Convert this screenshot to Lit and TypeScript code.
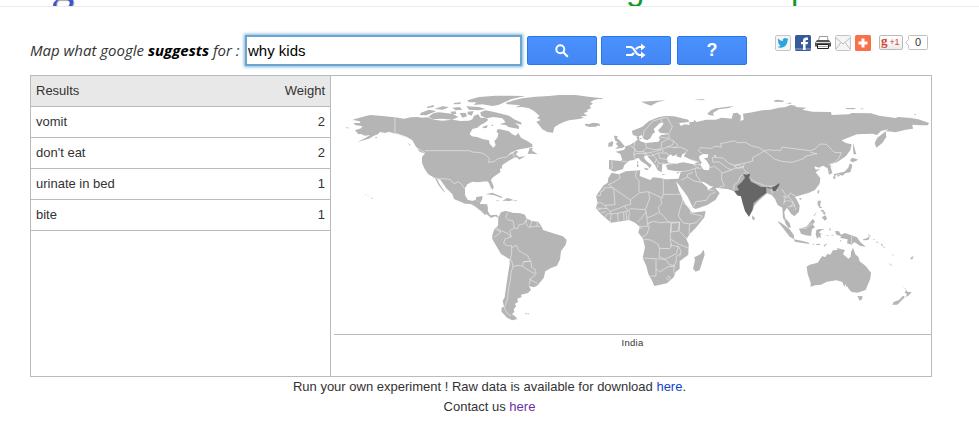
import { LitElement, html, css, svg } from "lit";
import { customElement, property } from "lit/decorators.js";

// Each region is drawn on a grid three times finer than the page, from its own origin.
interface Region { x: number; y: number; land: string; borders: string; focus?: string; water?: string; }

const regions: Region[] = [
  {
    x: 340, y: 85,
    land: `M45 103 62 98 80 93 95 90 130 93 168 97 195 101 215 97 235 96 250 98 265 97 285 104 310 107 340 104 365 108 390 107 400 103 405 92 418 88 424 98 440 98 448 104 440 112 425 120 415 128 400 132 392 147 398 154 415 156 430 162 450 166 452 176 463 188 470 180 466 168 475 158 478 146 472 138 478 132 490 134 510 139 520 148 530 152 538 144 546 158 565 168 580 178 580 186 560 190 535 194 515 203 508 211 522 204 530 197 538 200 530 208 540 216 560 214 540 224 536 218 528 217 508 228 490 240 488 252 483 250 484 262 460 278 456 286 464 304 462 314 456 309 450 294 444 289 430 290 415 292 400 290 385 298 378 310 378 330 386 344 400 348 410 345 412 336 430 333 430 342 422 356 442 360 446 366 446 385 438 390 425 377 410 365 395 357 378 356 345 342 340 328 322 310 304 284 294 282 302 298 320 324 312 317 299 301 288 280 268 268 257 252 249 234 249 216 258 205 240 195 230 184 220 166 205 157 188 150 170 146 148 140 140 144 122 141 118 147 105 152 90 161 55 171 78 160 94 150 78 152 66 147 58 148 48 136 66 130 70 124 48 120 44 114 64 114 62 109 42 105Z
    M385 46 420 36 470 32 560 33 518 42 500 50 478 60 460 63 430 58 404 60 412 52 390 52Z M343 54 366 52 364 57 346 58Z M262 66 285 60 284 66 266 69Z M286 72 310 64 330 66 312 74Z M340 68 362 66 370 74 350 76Z M246 83 270 74 292 78 262 91 242 90Z M268 95 284 84 300 82 340 86 358 96 340 104 310 101 282 103Z M334 80 350 79 352 86 340 88Z M362 85 380 83 384 94 370 98Z M382 64 420 66 440 72 420 76 390 74Z M386 80 404 78 398 92 386 88Z M424 82 440 76 462 80 478 84 510 92 528 104 546 112 548 119 528 114 540 124 540 132 520 128 508 126 500 120 482 118 500 112 490 100 462 96 444 100 426 92Z M430 126 446 120 444 128 434 130Z M456 122 462 118 462 123Z
    M20 127 34 129 22 130Z M106 158 116 155 112 160Z M207 173 214 180 212 182Z M236 193 256 201 258 205 243 201Z M95 337 101 340 99 343Z M86 331 90 334 86 334Z M78 328 82 330 78 330Z
    M440 328 460 323 490 336 488 339 464 330Z M497 343 507 339 522 344 512 348 497 347Z M472 345 482 347 474 348Z M528 346 536 347 529 349Z M566 207 572 190 582 188 578 196 596 208 580 206Z M485 382 500 378 520 383 552 387 552 390 484 390Z`,
    borders: `M168 97V146L178 146 186 152 205 157M258 197H392L400 201 425 203 438 208 446 215 452 222 448 232 468 229 474 222 490 218 505 216 512 207 522 204 526 218M287 279 300 281 322 282 334 284 345 296 358 290 368 298 378 312M400 358 410 348 420 350M414 366 426 362 442 361M428 378 446 375M236 190 258 203`,
  },
  {
    x: 480, y: 85,
    land: `M85 52 105 46 130 40 170 35 210 33 240 30 290 30 328 35 370 40 345 45 334 51 342 56 332 62 336 70 322 76 328 79 314 85 325 92 305 94 315 98 300 102 270 106 256 110 240 118 226 127 222 143 205 141 190 133 180 120 172 110 185 105 174 98 182 93 165 78 150 70 130 66 108 67 125 61 80 57Z M318 116 330 117 342 113 358 115 363 120 350 125 332 126 319 122Z M475 227 478 232 476 236 474 233Z M474 237 479 239 478 246 474 246Z`,
    borders: ``,
  },
  {
    x: 600, y: 85,
    land: `M30 225 65 228 70 224 64 207 50 200 76 194 80 184 92 180 106 172 116 164 112 156 120 153 122 168 140 174 178 170 184 162 178 158 186 150 206 148 214 146 184 144 177 136 190 122 194 114 184 113 164 132 168 142 160 148 154 160 145 166 134 162 128 150 118 155 102 150 98 138 130 125 150 108 180 96 200 93 225 94 268 104 270 111 240 114 246 123 256 118 272 120 270 112 284 110 286 104 292 111 322 104 350 104 368 98 398 101 402 85 415 83 426 92 424 108 434 104 432 86 460 82 490 76 515 74 540 68 560 66 574 60 590 62 590 66 622 68 610 74 640 80 696 81 698 90 750 88 758 84 816 85 840 92 890 99 898 96 935 99 958 103 990 114 986 121 964 121 940 119 942 131 920 134 890 142 860 138 862 156 850 174 832 188 827 174 835 158 868 133 846 138 834 150 820 146 774 148 728 166 740 174 758 178 754 196 740 214 714 232 694 238 696 250 700 264 690 269 686 250 672 242 660 248 646 244 650 254 664 252 650 262 664 280 662 296 648 315 630 323 600 332 588 336 594 345 602 362 600 380 586 394 576 386 564 368 556 380 558 398 572 415 576 428 566 424 552 400 550 368 536 360 528 342 518 330 504 325 476 350 466 362 462 374 450 395 440 380 432 352 426 334 415 332 404 318 385 312 360 310 334 303 315 291 306 290 324 306 328 315 344 304 362 324 350 344 325 360 290 372 282 368 265 334 234 292 240 278 246 258 228 258 206 254 201 242 212 234 190 238 188 262 176 256 168 240 148 217 144 211 134 216 142 228 158 240 152 250 144 240 126 228 118 218 104 225 90 227 76 240 72 252 45 260 30 252Z
    M45 152 56 153 54 160 62 166 74 180 78 184 70 189 48 191 58 184 50 176 56 172 48 166Z M28 175 40 168 43 174 40 184 28 186Z M122 158 128 160 126 164Z M126 50 160 48 200 46 175 52 156 62 140 56Z M325 86 336 76 350 70 404 63 390 69 360 73 342 84 345 92 330 90Z M285 43 320 43 310 46Z M524 47 534 44 555 47 552 51 526 50Z M560 54 578 53 575 57Z M740 69 772 69 764 73 742 72Z M784 70 796 72 786 73Z M944 88 952 88 950 91Z M0 39 12 40 8 43 0 42Z M0 115 3 122 0 124Z M136 248 150 251 144 256 136 252Z M188 267 200 268 192 270Z M233 262 243 259 236 266Z
    M763 174 766 186 768 194 772 208 764 208 762 192Z M754 224 760 218 778 224 762 232 754 228Z M756 236 760 242 754 262 740 264 730 272 718 268 706 273 704 268 722 263 736 260 748 248 752 236Z M704 273 711 275 707 283 702 279Z M714 270 724 269 718 276Z M656 318 662 314 659 326 655 324Z M600 340 608 339 604 346Z`,
    water: `M206 230 204 218 214 208 222 214 234 208 232 214 246 218 250 208 262 202 254 214 276 224 296 232 284 238 252 232 232 236 212 235Z M300 214 312 207 328 208 326 218 314 220 322 226 332 242 330 256 314 254 304 240 308 232 302 224Z M344 212 350 210 350 216Z`,
    borders: `M310 206 298 198 304 188 338 190 346 184 368 186 364 176 384 172 405 167 416 173 440 172 456 182 480 188 495 197M495 197 515 194 520 196 545 196 550 186 570 189 592 192 634 197 648 192 664 177 682 178 694 190 706 202 727 203 720 219 706 233 690 238M495 198 508 207 526 222 548 229 580 232 616 220 618 214 654 206 634 202M495 197 480 208 460 218 462 228 436 235 432 250 440 260 454 267M455 280 466 290 504 304M505 302 516 304 534 300M360 308 376 302 368 284 368 265 394 256 410 249 430 248M440 262 424 274 418 290 405 300 404 314M330 249 346 244 360 254 370 264M340 217 342 232 360 230 386 250 400 255M342 217 372 219 390 235 408 241 436 234M404 242 416 250 434 246 418 240 404 242M198 240 222 236 M245 260 270 257 288 250 300 248M282 238 298 250 310 249M288 250 292 270 306 290M246 286 265 276 265 268 282 262M265 276 286 288 306 292M284 366 290 350 322 346 332 330 350 320M325 315 344 316M270 223 298 230 302 240M284 238 304 240M131 160 136 136 148 124 162 108 186 101 190 114M184 100 206 98 212 112 220 124 212 143M182 156 208 160M210 148 210 162 224 168 222 178 204 188 190 190M224 168 236 180 230 188 204 184M222 188 244 186 266 196 258 204M140 174 142 188 164 194 186 192 188 172 208 162M108 170 104 188 112 200 132 200 142 189M94 182 108 192 104 208 108 222M66 228 84 230M38 228 40 248 34 253M104 208 120 205 142 206 136 212M130 200 146 204 166 200 188 194M140 210 158 213 178 204 204 204 210 216M158 205 172 222 168 234M178 204 182 220 206 224M172 222 180 236 196 234M176 238 176 248M190 192 194 202M694 238 700 247M516 305 520 326M528 304 536 318M548 312 560 330 554 358M552 334 566 338 574 324 592 335M565 330 580 348 586 360 590 374M554 352 566 346 582 352 578 362 566 366M574 366 588 360M552 400 562 408`,
    focus: `M432 266 442 270 454 265 450 278 456 290 472 298 486 306 502 306 502 324 488 334 464 354 460 376 450 395 438 378 430 352 426 334 416 331 406 318 420 316 414 304 428 292 438 278Z M504 306 516 308 528 302 542 294 540 302 530 318 522 318 520 311 506 310Z`,
  },
  {
    x: 470, y: 200,
    land: `M0 3 25 2 32 12 55 13 56 32 64 46 84 44 88 53 78 49 66 54 48 38 30 28 14 14Z M88 50 96 40 112 34 117 43 120 35 128 39 152 40 168 44 172 55 188 63 208 65 218 80 222 90 250 99 282 109 293 120 290 134 276 154 273 178 264 197 246 204 229 214 224 234 206 256 195 262 180 258 186 270 177 279 156 284 158 291 145 296 147 306 137 312 142 318 134 328 136 336 129 342 145 355 132 357 112 350 98 336 97 324 105 320 101 302 107 292 110 270 117 222 122 192 122 178 96 162 82 138 70 118 70 105 76 88 87 77Z M110 345 128 346 133 354 146 357 130 361 112 352Z M168 340 173 339 171 344Z M175 340 180 340 177 345Z M100 0 110 0 105 3Z M122 0 134 1 143 2 140 3Z`,
    borders: `M116 38 110 52 118 60 132 62 136 84 122 92 127 110M136 84 146 87 150 74 164 72 174 56M174 56 170 70 180 82 204 78 214 80M188 63 184 80M205 65 204 80M76 86 96 96 76 112M82 84 100 94 112 98 127 110 108 117 104 130 116 138 128 136 128 162 123 180M128 143 142 136 150 152 177 168 184 184 164 185 160 199 148 196 132 200 128 182 123 178M164 185 186 184 188 202 201 210 194 220 160 199M132 200 126 218 124 240 118 270 116 296 106 324 116 342 126 347M201 216 200 224 182 238 205 250M184 238 180 256`,
  },
  {
    x: 580, y: 160,
    land: `M98 38 120 43 140 34 184 31 182 48 214 60 222 52 238 53 260 58 300 56 302 69 296 70 291 63 300 92 314 124 328 144 340 158 380 153 376 172 350 204 332 222 322 238 329 252 328 284 302 304 302 326 290 336 284 352 264 370 226 378 218 360 208 342 202 318 191 294 198 262 192 236 178 218 182 200 168 188 150 180 112 186 96 188 66 162 50 144 56 130 51 108 74 76 86 68 88 54Z M374 269 377 284 362 330 350 335 342 326 348 300 346 292 364 283Z`,
    borders: `M120 43 124 54 105 66 88 74M50 108 64 106 66 94 74 92 76 83 102 83M88 74 154 120M104 85 108 134 78 136 66 128 52 130M154 120 182 98 208 95M172 33 169 50 180 62 180 96M208 95 250 114 253 102 253 54M253 103 309 103M209 97 212 114 200 148M245 112 248 132 238 142 242 156 224 166 204 174 200 150M154 120 155 133 136 138 148 152 154 146 200 149M151 152 149 180M202 154 188 174 176 186M241 158 252 166 268 186 302 187M310 110 310 126 302 150 298 168 312 188 332 192M311 128 334 144M334 142 334 160 370 168 352 188 332 192 330 222M302 187 300 212 324 237M277 190 302 187 298 213 276 216 277 190M205 190 224 184 242 188 268 186 277 190 274 216 274 240 278 258 272 266 242 265 240 292M204 174 205 196 215 187M196 238 216 240 236 252 242 265M180 199 212 199 204 222 190 232M180 205 190 204M191 294 258 298M240 290 258 298 292 281 298 260 272 255M258 298 272 314 286 316 292 304 292 288 302 282M276 238 298 252 328 264M231 299V348L214 348M231 326 242 336 268 320 286 319M298 258 306 274 302 290M286 316 284 336 288 342M262 355 270 348 275 354 268 361ZM66 158 80 155M76 174 84 162 92 160M93 187 97 162M118 186 116 160M135 182 134 156M144 182 141 154M78 136 84 146 52 144M84 146 94 154 110 148 122 144 136 138M94 154 94 162 116 160 134 156 148 152M56 149 66 148`,
  },
  {
    x: 720, y: 160,
    land: `M263 320 272 314 296 308 304 296 310 288 318 292 326 281 334 284 342 271 356 270 353 264 378 270 372 282 388 296 395 290 396 276 402 263 410 284 418 290 422 304 440 318 456 338 454 356 440 390 416 398 398 396 390 388 384 378 380 381 382 370 376 380 370 366 352 361 324 365 306 374 288 376 275 380 275 368 266 342Z M415 408 431 409 429 418 422 422Z
    M348 213 360 214 366 224 378 219 414 232 424 246 440 260 424 258 406 246 398 254 384 250 386 238 364 234 366 228 352 224Z M240 206 262 200 281 177 288 184 282 194 288 202 279 208 276 228 260 226 246 221Z M175 183 184 187 212 208 224 224 226 238 212 230 192 204Z M224 238 248 242 270 248 270 252 228 245Z M198 182 206 184 214 202 208 203 199 190Z M99 166 108 174 105 181 100 178Z
    M292 210 300 207 317 208 304 212 300 220 308 220 304 226 307 235 300 230 294 236 290 222Z M296 122 306 122 303 138 311 145 302 144 296 134Z M284 166 294 156 286 168Z M305 150 316 150 310 158Z M314 154 320 158 316 166 312 160Z M308 172 320 166 324 176 318 182 312 176Z M331 203 336 208 332 214Z M278 252 288 251 284 254Z M292 252 304 251 302 255 292 255Z M314 256 326 250 316 260Z M322 225 330 226 324 228Z M338 225 346 228 338 228Z M364 240 368 241 364 246Z M432 238 446 234 448 229 452 232 448 240 434 241Z M446 222 454 226 456 232Z M462 236 468 240 463 240Z M470 244 482 250 474 248Z M486 250 496 260 486 255Z M494 260 500 264 494 263Z M508 308 522 318 514 315Z M520 282 524 288 520 286Z M576 292 584 288 580 298 574 298Z
    M549 378 560 386 566 396 578 396 570 406 560 412 564 402 557 398 562 390Z M552 407 558 411 544 425 535 434 520 434 524 426 540 420Z`,
    borders: `M398 224V253M243 205 262 205 274 192 284 192`,
  },
];

@customElement("world-map")
class WorldMap extends LitElement {
  static styles = css`
    :host { display: block; height: 258px; }
    svg { display: block; width: 599px; height: 258px; }
    .land { fill: #b5b5b5; }
    .water { fill: #fff; }
    .focus { fill: #666; }
    .borders { fill: none; stroke: #e6e6e6; stroke-width: 2.1; stroke-linejoin: round; }
  `;
  render() {
    return html`<svg viewBox="332 76 599 258">
      ${regions.map(r => svg`<g transform="translate(${r.x} ${r.y}) scale(0.33333)">
        <path class="land" d=${r.land}></path>
        ${r.water ? svg`<path class="water" d=${r.water}></path>` : ""}
        <path class="borders" d=${r.borders}></path>
        ${r.focus ? svg`<path class="focus" d=${r.focus}></path>` : ""}
      </g>`)}
    </svg>`;
  }
}

@customElement("share-bar")
class ShareBar extends LitElement {
  static styles = css`
    :host { display: flex; height: 16px; font-family: "Liberation Sans", Arial, sans-serif; }
    .icon { width: 16px; height: 16px; margin-right: 4px; flex: none; }
    .plus { box-sizing: border-box; width: 24px; height: 15px; margin-left: 4px; border: 1px solid #bbb; border-radius: 2px; background: linear-gradient(#fff, #ececec); display: flex; align-items: center; color: #d0452f; font-size: 9px; line-height: 13px; }
    .g { font: bold 13px/11px "Liberation Serif", serif; height: 15px; margin-left: 1px; }
    .one { margin-left: 2px; font-size: 9px; letter-spacing: -0.2px; }
    .bubble { width: 24px; height: 16px; margin-left: 2px; }
    .bubble text { font: 11px "Liberation Sans", Arial, sans-serif; fill: #333; }
  `;
  render() {
    return html`
      <svg class="icon" viewBox="0 0 16 16"><rect x=".5" y=".5" width="15" height="15" rx="1.5" fill="#f6f6f6" stroke="#c6c6c6"/><path fill="#2ba5dc" d="M3 3.6C4.3 5.3 5.9 6 7.8 6.1 7.4 4 9 2.9 10.4 3.1c.7.1 1 .4 1.4.7l1.5-.5-.8 1.2 1.2-.2-1.2 1.3C12.4 9.8 9.600 12.700 6 12.700c-1.500 0-2.500-.4-3.500-1 1.300.1 2.500-.3 3.300-1-1.100-.1-1.700-.7-2-1.500h.9C3.500 8.700 2.900 7.900 2.900 6.800l1 .2C2.800 6.100 2.500 4.800 3 3.600Z"/></svg>
      <svg class="icon" viewBox="0 0 16 16"><rect width="16" height="16" rx="1.5" fill="#375a9a"/><rect y="13" width="16" height="2" fill="#6884b8"/><path fill="#fff" d="M8 15V9.200H6V7h2V5.600C8 3.500 9.300 2.600 11 2.600h2V5h-1.300c-.8 0-1.100.3-1.100 1V7H13l-.3 2.200h-2.100V15Z"/></svg>
      <svg class="icon" viewBox="0 0 16 16"><path d="M3.500 5.500 4.500 1.500h8l.5 4Z" fill="#fff" stroke="#999"/><path d="M2 5h12l2 3v3.500H0V8Z" fill="#555"/><path d="M1 7.500h14" stroke="#ddd"/><path d="M2.500 9.500h11v4h-11Z" fill="#fff" stroke="#222"/><path d="M3 11.500h10" stroke="#aaa"/></svg>
      <svg class="icon" viewBox="0 0 16 16"><rect x=".5" y=".5" width="15" height="15" rx="1" fill="#f5f5f5" stroke="#c4c4c4"/><path d="m1 3 7 6 7-6M1 14l5-6.500M15 14l-5-6.500" fill="none" stroke="#bcbcbc"/></svg>
      <svg class="icon" viewBox="0 0 16 16"><rect width="16" height="16" rx="1.500" fill="#f8714b"/><path d="M8 3.500v9M3.500 8h9" stroke="#fff" stroke-width="3"/></svg>
      <div class="plus"><span class="g">g</span><span class="one">+1</span></div>
      <svg class="bubble" viewBox="0 0 24 16"><path d="M4.500.5h17a1 1 0 0 1 1 1v12a1 1 0 0 1-1 1h-17a1 1 0 0 1-1-1v-3L.8 7.500l2.700-3v-3a1 1 0 0 1 1-1Z" fill="#fff" stroke="#c0c0c0"/><text x="10" y="11.300">0</text></svg>
    `;
  }
}

@customElement("app-root")
class AppRoot extends LitElement {
  @property({ attribute: false }) rows: [string, number][] = [["vomit", 2], ["don't eat", 2], ["urinate in bed", 1], ["bite", 1]];

  static styles = css`
    :host { display: block; height: 436px; overflow: hidden; background: #fff; color: #333; font: 13px "Liberation Sans", Arial, sans-serif; }
    .title { display: flex; height: 6px; overflow: hidden; border-bottom: 1px solid #ebebeb; }
    .title span { flex: none; line-height: 50px; height: 50px; }
    .blue { width: 575px; margin: -40px 0 0 51px; font-family: "Liberation Serif", serif; font-size: 46px; color: #3a56cf; text-shadow: 1px 1px 1px #aaa; }
    .green { width: 165px; margin-top: -36px; font-family: "Liberation Sans", Arial, sans-serif; font-size: 33px; color: #119a2c; }
    .stem { margin-top: -37px; }
    .bar { display: flex; height: 68px; padding-left: 30px; box-sizing: border-box; padding-top: 28px; }
    .label { width: 215px; flex: none; font: italic 15px/31px "Open Sans", sans-serif; white-space: nowrap; }
    .label b { color: #000; }
    .query { box-sizing: border-box; width: 277px; height: 31px; border: 2px solid #6ba6cf; box-shadow: 0 0 3px 1px #7db5dc; font: 15px/27px "Liberation Sans", Arial, sans-serif; color: #000; padding: 0 0 0 1px; margin: 0 5px 0 0; outline: none; }
    .btn { box-sizing: border-box; width: 70px; height: 29px; margin: 1px 4px 0 0; padding: 0; border: 1px solid #2478ee; border-radius: 2px; background: linear-gradient(#4a91ff, #4387f3); display: flex; justify-content: center; align-items: center; flex: none; color: #fff; font: bold 18px/27px "Liberation Sans", Arial, sans-serif; }
    .wide { margin-right: 6px; }
    .last { margin-right: 28px; }
    .panel { box-sizing: border-box; width: 902px; height: 302px; margin-left: 30px; border: 1px solid #bbb; display: grid; grid-template-columns: 300px 1fr; }
    .results { border-right: 1px solid #bbb; }
    .row { display: flex; justify-content: space-between; height: 30px; line-height: 29px; border-bottom: 1px solid #bbb; padding: 0 5px; }
    .head { background: #e8e8e8; }
    .places { margin-left: 3px; border-top: 1px solid #bbb; text-align: center; font-size: 9.5px; line-height: 15px; letter-spacing: 0.25px; }
    .foot { width: 979px; text-align: center; line-height: 20px; }
    a { color: #1144cc; text-decoration: none; }
    .seen { color: #6a2fa8; }
  `;

  render() {
    return html`
      <div class="title"><span class="blue">g</span><span class="green">g</span><span class="green stem">p</span></div>
      <div class="bar">
        <label class="label">Map what google <b>suggests</b> for :</label>
        <input class="query" value="why kids">
        <button class="btn"><svg width="14" height="14" viewBox="0 0 14 14"><circle cx="5.300" cy="5.300" r="4" fill="none" stroke="#fff" stroke-width="1.900"/><path d="m8.300 8.300 4.500 4.500" stroke="#fff" stroke-width="2.200"/></svg></button>
        <button class="btn wide"><svg width="20" height="16" viewBox="0 0 20 16"><path d="M0 4h4.500C9 4 9 12 13.500 12H16M0 12h4.500c1.600 0 2.700-.9 3.500-2.200M10 6.200C10.800 4.900 11.900 4 13.500 4H16" fill="none" stroke="#fff" stroke-width="2.200"/><path d="M15 .5 19.500 4 15 7.500ZM15 8.500 19.500 12 15 15.500Z" fill="#fff"/></svg></button>
        <button class="btn last">?</button>
        <share-bar></share-bar>
      </div>
      <div class="panel">
        <div class="results">
          <div class="row head"><span>Results</span><span>Weight</span></div>
          ${this.rows.map(([name, weight]) => html`<div class="row"><span>${name}</span><span>${weight}</span></div>`)}
        </div>
        <div class="map">
          <world-map></world-map>
          <div class="places">India</div>
        </div>
      </div>
      <div class="foot">Run your own experiment ! Raw data is available for download <a>here</a>.<br>Contact us <a class="seen">here</a></div>
    `;
  }
}
